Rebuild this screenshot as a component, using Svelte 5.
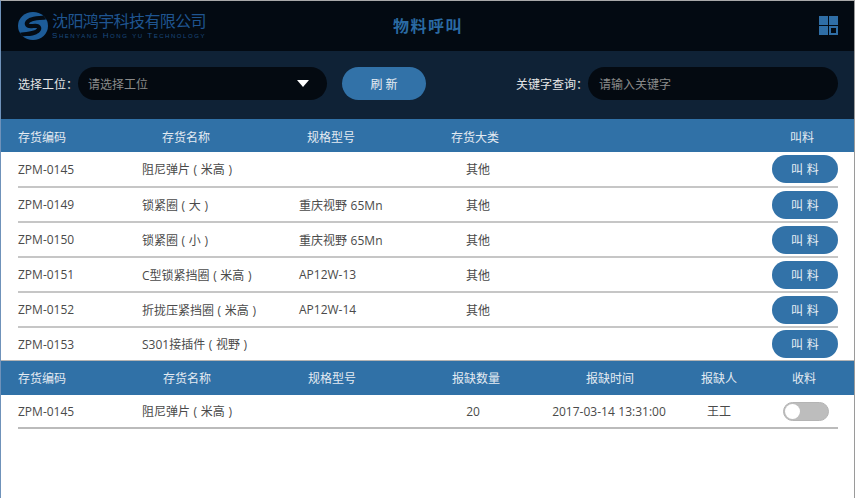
<script>
  const stock = [
    { code: 'ZPM-0145', name: '阻尼弹片 ( 米高 )', spec: '', kind: '其他' },
    { code: 'ZPM-0149', name: '锁紧圈 ( 大 )', spec: '重庆视野 65Mn', kind: '其他' },
    { code: 'ZPM-0150', name: '锁紧圈 ( 小 )', spec: '重庆视野 65Mn', kind: '其他' },
    { code: 'ZPM-0151', name: 'C型锁紧挡圈 ( 米高 )', spec: 'AP12W-13', kind: '其他' },
    { code: 'ZPM-0152', name: '折拢压紧挡圈 ( 米高 )', spec: 'AP12W-14', kind: '其他' },
    { code: 'ZPM-0153', name: 'S301接插件 ( 视野 )', spec: '', kind: '' }
  ];
</script>

<div class="page">
  <header class="topbar">
    <div class="brand">
      <svg class="logo" viewBox="0 0 30 28" width="30" height="28">
        <defs>
          <clipPath id="disc"><ellipse cx="15" cy="14" rx="15" ry="14" /></clipPath>
        </defs>
        <g clip-path="url(#disc)">
          <rect width="30" height="28" fill="#1d5c98" />
          <path d="M31 4C25 7 18 5 12 8 7 11 8 15 15 14 22 13 23 17 18 20 12 23 5 21-1 24" fill="none" stroke="#040b13" stroke-width="4.200" />
        </g>
      </svg>
      <div class="brand-text">
        <div class="brand-cn">沈阳鸿宇科技有限公司</div>
        <div class="brand-en">Shenyang Hong yu Technology</div>
      </div>
    </div>
    <h1 class="title">物料呼叫</h1>
    <svg class="menu" viewBox="0 0 19 19" width="19" height="19">
      <rect x="0" y="0" width="9" height="9" fill="#2f6ea6" />
      <rect x="10" y="0" width="9" height="9" fill="#2f6ea6" />
      <rect x="0" y="10" width="9" height="9" fill="#2f6ea6" />
      <rect x="11" y="11" width="7" height="7" fill="none" stroke="#2f6ea6" stroke-width="2" />
    </svg>
  </header>

  <div class="toolbar">
    <span class="label">选择工位：</span>
    <div class="field select">
      <span>请选择工位</span>
      <i class="caret"></i>
    </div>
    <button class="refresh">刷 新</button>
    <span class="label search-label">关键字查询：</span>
    <div class="field search"><span>请输入关键字</span></div>
  </div>

  <div class="head stock-head">
    <span>存货编码</span>
    <span>存货名称</span>
    <span>规格型号</span>
    <span>存货大类</span>
    <span class="call-title">叫料</span>
  </div>
  <div class="list">
    {#each stock as item, i}
      <div class="row stock-row" class:first={i === 0} class:last={i === stock.length - 1}>
        <span>{item.code}</span>
        <span>{item.name}</span>
        <span>{item.spec}</span>
        <span class="center">{item.kind}</span>
        <button class="call">叫 料</button>
      </div>
    {/each}
  </div>

  <div class="head short-head">
    <span>存货编码</span>
    <span>存货名称</span>
    <span>规格型号</span>
    <span>报缺数量</span>
    <span>报缺时间</span>
    <span>报缺人</span>
    <span>收料</span>
  </div>
  <div class="row short-row">
    <span>ZPM-0145</span>
    <span>阻尼弹片 ( 米高 )</span>
    <span></span>
    <span class="center">20</span>
    <span class="center">2017-03-14 13:31:00</span>
    <span class="center">王工</span>
    <div class="toggle"><i></i></div>
  </div>
</div>

<style>
  :global(body) {
    margin: 0;
    background: #fff;
  }

  .page {
    box-sizing: border-box;
    width: 855px;
    height: 498px;
    overflow: hidden;
    border-top: 1px solid #a9a9a9;
    border-left: 1px solid #6f92ba;
    border-right: 1px solid #9a9a9a;
    background: #fff;
    color: #4a4a4a;
    font-family: "Open Sans", "Noto Sans CJK SC", sans-serif;
    font-size: 12px;
  }

  .topbar {
    display: flex;
    align-items: center;
    height: 50px;
    padding: 0 16px 0 17px;
    background: #030a12;
  }

  .brand {
    display: flex;
    align-items: center;
    gap: 4px;
    width: 190px;
    flex: none;
  }

  .brand-cn {
    color: #1f5590;
    font-size: 16px;
    line-height: 18px;
    letter-spacing: -0.6px;
    white-space: nowrap;
  }

  .brand-en {
    margin-top: 1px;
    color: #1b4a80;
    font-family: "Liberation Sans", sans-serif;
    font-size: 8px;
    line-height: 9px;
    font-variant: small-caps;
    letter-spacing: 1.55px;
    white-space: nowrap;
  }

  .title {
    margin: 0 0 2px 185px;
    color: #2a6aa3;
    font-size: 16px;
    font-weight: 700;
    letter-spacing: 1.5px;
  }

  .menu {
    margin-left: auto;
    margin-bottom: 2px;
  }

  .toolbar {
    display: flex;
    align-items: center;
    box-sizing: border-box;
    height: 68px;
    padding: 0 0 3px 17px;
    background: #0f2236;
  }

  .label {
    color: #e6e6e6;
    font-size: 12px;
    white-space: nowrap;
  }

  .field {
    display: flex;
    align-items: center;
    box-sizing: border-box;
    height: 33px;
    border-radius: 17px;
    background: #040a11;
    color: #8a8a8a;
    padding-left: 10px;
    font-size: 12px;
  }

  .select {
    width: 249px;
    position: relative;
  }

  .caret {
    position: absolute;
    right: 18px;
    top: 13px;
    border-left: 6px solid transparent;
    border-right: 6px solid transparent;
    border-top: 7px solid #fff;
  }

  .refresh {
    width: 84px;
    height: 33px;
    margin-left: 15px;
    border: 0;
    border-radius: 17px;
    background: #3272a8;
    color: #e8eef4;
    font: inherit;
    padding: 0;
  }

  .search-label {
    margin-left: 90px;
  }

  .search {
    width: 250px;
    padding-left: 11px;
  }

  .head {
    display: grid;
    align-items: center;
    box-sizing: border-box;
    height: 33px;
    padding-left: 17px;
    background: #3071a7;
    color: #e4ebf2;
    white-space: nowrap;
  }

  .stock-head {
    grid-template-columns: 144px 145px 144px 1fr 66px;
    padding-top: 2px;
    padding-right: 16px;
  }

  .call-title {
    text-align: center;
    padding-right: 6px;
  }

  .short-head {
    height: 34px;
    grid-template-columns: 145px 145px 144px 134px 115px 91px 1fr;
  }

  .list {
    border-bottom: 1px solid #b4b4b4;
  }

  .row {
    display: grid;
    align-items: center;
    box-sizing: border-box;
    height: 35px;
    margin: 0 16px 0 17px;
    border-bottom: 2px solid #c6c6c6;
    white-space: nowrap;
    word-spacing: 0.5px;
  }

  .row.first {
    height: 36px;
  }

  .row.last {
    border-bottom: 0;
    height: 32px;
  }

  .stock-row {
    grid-template-columns: 124px 157px 120px 118px 1fr 66px;
  }

  .stock-row .call {
    grid-column: 6;
  }

  .short-row {
    height: 34px;
    border-bottom-color: #bbb;
    grid-template-columns: 124px 157px 120px 108px 164px 56px 1fr;
  }

  .center {
    text-align: center;
  }

  .call {
    width: 66px;
    height: 28px;
    border: 0;
    border-radius: 14px;
    background: #3272a8;
    color: #e8eef4;
    font: inherit;
    letter-spacing: 0.3px;
    padding: 0;
  }

  .toggle {
    justify-self: end;
    display: flex;
    align-items: center;
    box-sizing: border-box;
    width: 46px;
    height: 19px;
    margin-right: 9px;
    border: 1px solid #b4b4b4;
    border-radius: 10px;
    background: #bdbdbd;
  }

  .toggle i {
    width: 15px;
    height: 15px;
    margin-left: 1px;
    border-radius: 50%;
    background: #fff;
  }
</style>
